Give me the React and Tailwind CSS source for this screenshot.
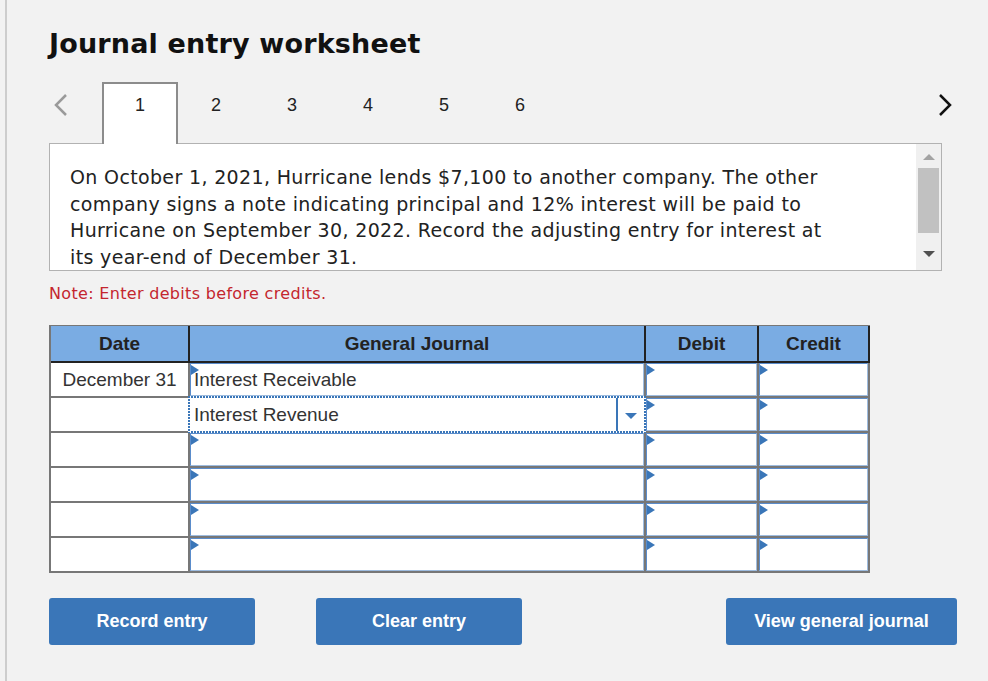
import React from "react";

const ARIAL = "font-['Liberation_Sans',Arial,sans-serif]";
const VERD = "font-['DejaVu_Sans',Verdana,sans-serif]";

function Flag() {
  return (
    <span className="absolute left-0 top-[1px] h-0 w-0 border-y-[5px] border-l-[8px] border-y-transparent border-l-[#3a76b8]" />
  );
}

function InputCell({ text, flag = true }) {
  return (
    <div className="relative h-full border border-t-[#5a8ccb] border-l-[#5a8ccb] border-b-[#9ebcdf] border-r-[#9ebcdf] bg-white flex items-center">
      {flag && <Flag />}
      {text && <span className="pl-[3px] text-[19px] leading-none text-[#333]">{text}</span>}
    </div>
  );
}

function SelectCell({ text }) {
  return (
    <div className="relative z-10 h-full bg-white flex items-stretch">
      <span className="absolute -top-[2px] -left-[2px] -right-[2px] h-[2px] bg-[repeating-linear-gradient(90deg,#3a76b8_0_2px,#ffffff_2px_3px)]" />
      <span className="absolute -bottom-[2px] -left-[2px] -right-[2px] h-[2px] bg-[repeating-linear-gradient(90deg,#3a76b8_0_2px,#ffffff_2px_3px)]" />
      <span className="absolute -top-[2px] -bottom-[2px] -left-[2px] w-[2px] bg-[repeating-linear-gradient(180deg,#3a76b8_0_2px,#ffffff_2px_3px)]" />
      <span className="absolute -top-[2px] -bottom-[2px] -right-[2px] w-[2px] bg-[repeating-linear-gradient(180deg,#3a76b8_0_2px,#ffffff_2px_3px)]" />
      <div className="flex-1 flex items-center pl-[4px] text-[19px] leading-none text-[#333]">{text}</div>
      <div className="w-[28px] border-l-2 border-[#3a76b8] flex items-center justify-center pt-[3px]">
        <span className="h-0 w-0 border-x-[6px] border-t-[6px] border-x-transparent border-t-[#3a76b8]" />
      </div>
    </div>
  );
}

const rows = [
  { date: "December 31", gj: "Interest Receivable" },
  { date: "", gj: "Interest Revenue", select: true },
  { date: "", gj: "" },
  { date: "", gj: "" },
  { date: "", gj: "" },
  { date: "", gj: "" },
];

export default function App() {
  return (
    <div className="h-[681px] w-[988px] bg-[#f2f2f2] pl-[5px] overflow-hidden">
      <div className={`h-full border-l-2 border-[#cdcdcd] pl-[42px] ${ARIAL}`}>
        {/* Title */}
        <h1 className={`pt-[29px] text-[27px] leading-[30px] tracking-[0.17px] font-bold text-[#111] ${VERD}`}>
          Journal entry worksheet
        </h1>

        {/* Tabs */}
        <div className="mt-[23px] flex h-[61px] w-[908px] items-stretch">
          <div className="w-[53px] flex items-start pt-[11px] pl-[4px]">
            <svg width="16" height="24" viewBox="0 0 16 24" fill="none">
              <polyline points="13,2 3,12 13,22" stroke="#9a9a9a" strokeWidth="2.5" />
            </svg>
          </div>
          <div className="relative z-10 -mb-px w-[76px] border-2 border-b-0 border-[#8c8c8c] bg-white pt-[11px] text-center text-[18px] leading-[20px] text-[#222]">
            1
          </div>
          {["2", "3", "4", "5", "6"].map((n) => (
            <div key={n} className="w-[76px] pt-[13px] text-center text-[18px] leading-[20px] text-[#222]">
              {n}
            </div>
          ))}
          <div className="ml-auto mr-[4px] pt-[11px]">
            <svg width="16" height="24" viewBox="0 0 16 24" fill="none">
              <polyline points="3,2 13,12 3,22" stroke="#111" strokeWidth="2.5" />
            </svg>
          </div>
        </div>

        {/* Content box */}
        <div className="flex h-[128px] w-[893px] border border-[#b2b2b2] bg-white">
          <div className={`flex-1 overflow-hidden pl-[20px] pt-[20px] text-[19px] leading-[26.6px] tracking-[0.35px] text-[#222] whitespace-nowrap ${VERD}`}>
            On October 1, 2021, Hurricane lends $7,100 to another company. The other
            <br />
            company signs a note indicating principal and 12% interest will be paid to
            <br />
            Hurricane on September 30, 2022. Record the adjusting entry for interest at
            <br />
            its year-end of December 31.
          </div>
          <div className="w-[25px] bg-[#f0f0f0] flex flex-col items-center">
            <span className="mt-[10px] h-0 w-0 border-x-[6px] border-b-[6px] border-x-transparent border-b-[#a3a3a3]" />
            <div className="mt-[8px] h-[65px] w-[21px] bg-[#c1c1c1]" />
            <span className="mt-[18px] h-0 w-0 border-x-[6px] border-t-[6px] border-x-transparent border-t-[#505050]" />
          </div>
        </div>

        {/* Note */}
        <div className={`mt-[13px] text-[16px] leading-[20px] tracking-[0.32px] text-[#c4262e] ${VERD}`}>
          Note: Enter debits before credits.
        </div>

        {/* Table */}
        <div className="mt-[21px] w-[821px] border-l-2 border-t border-[#777]">
          <div className="grid grid-cols-[139px_456px_113px_111px] bg-[#7aace3] text-[19px] font-bold text-[#222]">
            {["Date", "General Journal", "Debit", "Credit"].map((h) => (
              <div key={h} className="flex h-[37px] items-center justify-center border-r-2 border-b-2 border-[#222] leading-none">
                {h}
              </div>
            ))}
          </div>
          {rows.map((r, i) => (
            <div key={i} className="grid grid-cols-[139px_456px_113px_111px]">
              <div className="flex h-[35px] items-center justify-center border-r-2 border-b-2 border-[#777] bg-white text-[19px] leading-none text-[#333]">
                {r.date}
              </div>
              <div className="h-[35px] border-r-2 border-b-2 border-[#777]">
                {r.select ? <SelectCell text={r.gj} /> : <InputCell text={r.gj} />}
              </div>
              <div className="h-[35px] border-r-2 border-b-2 border-[#777]">
                <InputCell />
              </div>
              <div className="h-[35px] border-r-2 border-b-2 border-[#777]">
                <InputCell />
              </div>
            </div>
          ))}
        </div>

        {/* Buttons */}
        <div className="mt-[25px] flex w-[908px] text-[18px] font-bold text-white">
          <button className="h-[47px] w-[206px] rounded-[3px] bg-[#3a76b8]">Record entry</button>
          <button className="ml-[61px] h-[47px] w-[206px] rounded-[3px] bg-[#3a76b8]">Clear entry</button>
          <button className="ml-auto h-[47px] w-[231px] rounded-[3px] bg-[#3a76b8]">View general journal</button>
        </div>
      </div>
    </div>
  );
}
